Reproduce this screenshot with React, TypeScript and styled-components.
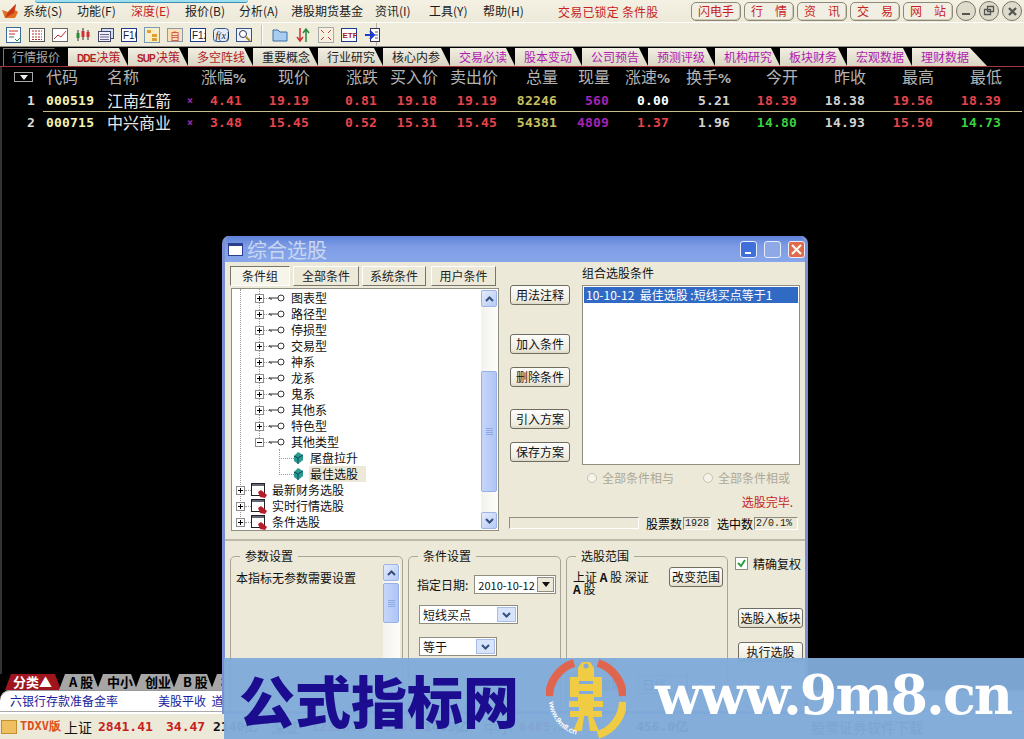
import React from 'react';
import styled, { createGlobalStyle } from 'styled-components';

const Global = createGlobalStyle`
  html, body { margin: 0; padding: 0; background: #000; }
  body { width: 1024px; height: 739px; overflow: hidden; font-family: "Noto Sans CJK SC", "Liberation Sans", sans-serif; font-size: 12px; }
  #root { width: 1024px; height: 739px; position: relative; overflow: hidden; }
  * { box-sizing: border-box; }
`;
const CJK = `"Noto Sans CJK SC", "Liberation Sans", sans-serif`;
const MONO = `"DejaVu Sans Mono", "Liberation Mono", monospace`;

const Page = styled.div`position: relative; display: flex; flex-direction: column; width: 1024px; height: 739px; background: #000;`;

/* ---- menu ---- */
const MenuBar = styled.div`position: relative; display: flex; align-items: center; height: 23px; background: linear-gradient(#f4f1e4, #ece9d8); border-bottom: 1px solid #fff; padding-left: 2px;`;
const TopGlow = styled.div`position: absolute; left: 35px; top: 0; width: 213px; height: 3px; background: #9fe0f0; border-radius: 0 0 6px 6px; border-bottom: 1px solid #3a8fb0;`;
const MenuItems = styled.div`display: flex; margin-left: 4px; width: 535px;`;
const MenuItem = styled.span<{ $red?: boolean; $w: number }>`width: ${p => p.$w}px; flex: none; white-space: nowrap; font-size: 12px; line-height: 16px; color: ${p => (p.$red ? '#c81e1e' : '#1c1c1c')};`;
const Lock = styled.span`width: 133px; flex: none; color: #c81e1e; font-size: 12px; letter-spacing: .2px;`;
const LinkBtn = styled.span`flex: none; display: flex; justify-content: center; gap: 12px; width: 50px; height: 19px; margin-right: 3px; line-height: 16px; font-size: 12px; color: #c81e1e; background: #f1efe3; border: 1px solid #8d8977; border-radius: 5px; box-shadow: inset -1px -1px 0 #cfcab6;`;
const WinBtn = styled.span`flex: none; width: 20px; height: 20px; margin-right: 3px; display: flex; align-items: center; justify-content: center; border-radius: 50%; border: 1px solid #77756a; background: #dedbca; color: #444;`;

/* ---- toolbar ---- */
const ToolBar = styled.div`display: flex; align-items: center; height: 24px; background: #efecdc; padding-left: 2px; border-bottom: 1px solid #8f8d84;`;
const Tools = styled.div`display: flex; align-items: center; height: 24px; width: 375px; border-right: 1px solid #b5b2a2;`;
const ToolSlot = styled.span<{ $w?: number }>`flex: none; width: ${p => p.$w ?? 23}px; height: 18px; display: flex; align-items: center; justify-content: center;`;
const ToolSep = styled.span`flex: none; width: 2px; height: 20px; margin: 0 5px 0 6px; background: #c6c3b2; border-right: 1px solid #fff;`;

/* ---- tabs ---- */
const TabRow = styled.div`display: flex; height: 20px; padding: 1px 0 0 3px; background: #000; border-bottom: 1px solid #a8343c;`;
const Tab = styled.span<{ $w: number; $color: string; $active?: boolean; $slant?: number }>`
  flex: none; width: ${p => p.$w}px; padding-left: 9px; line-height: 18px; font-size: 12px; white-space: nowrap;
  color: ${p => p.$color};
  background: ${p => (p.$active ? '#000' : 'linear-gradient(#f2efe3, #d9d5c3)')};
  ${p => (p.$active ? 'box-shadow: inset 1px 1px 0 #777;' : '')}
  clip-path: polygon(0 0, calc(100% - ${p => p.$slant ?? 9}px) 0, 100% 100%, 0 100%);
`;
const TabLatin = styled.span`font: bold 10px "Liberation Sans", sans-serif; letter-spacing: -.9px; margin-right: 1px;`;

/* ---- quote table ---- */
const Quotes = styled.div`flex: 1; background: #000; border-left: 2px solid #333; overflow: hidden;`;
const cols = '34px 71px 72px 22px 42px 67px 68px 60px 60px 60px 52px 60px 61px 67px 68px 68px 68px';
const HeadRow = styled.div`display: grid; grid-template-columns: ${cols}; height: 23px; padding-bottom: 4px; align-items: center; color: #b4b4b4; font-size: 16px; line-height: 19px; white-space: nowrap;`;
const Th = styled.span<{ $left?: boolean }>`text-align: ${p => (p.$left ? 'left' : 'right')}; ${p => (p.$left ? 'padding-left: 10px;' : '')} & b { font: bold 13px "DejaVu Sans", sans-serif; }`;
const Th2 = styled.span`text-align: left;`;
const SortBtn = styled.span`display: block; width: 19px; height: 10px; margin-left: 12px; border: 1px solid #aaa; position: relative; &::after { content: ''; position: absolute; left: 5px; top: 2px; border: 4px solid transparent; border-top: 5px solid #eee; border-bottom: 0; }`;
const DataRow = styled.div`display: grid; grid-template-columns: ${cols}; height: 21px; align-items: center; font: bold 13px/21px ${MONO}; letter-spacing: .2px; white-space: nowrap;`;
const Td = styled.span<{ $c: string }>`text-align: right; color: ${p => p.$c}; padding-right: 1px;`;
const Code = styled.span`color: #f2f2b8; padding-left: 10px; letter-spacing: .2px;`;
const Name = styled.span`color: #e8e8e8; font: 400 16px/21px ${CJK}; letter-spacing: 0;`;
const Mark = styled.span`color: #a02ca8; font-size: 10px; text-align: center;`;
const RowRule = styled.div`height: 1px; margin: 0 2px 0 41px; background: #c8c088;`;

/* ---- bottom ---- */
const Bottom = styled.div`flex: none; display: flex; flex-direction: column; background: #000;`;
const SheetRow = styled.div`display: flex; height: 16px; padding-left: 5px; background: #000;`;
const Sheet = styled.span<{ $w: number; $on?: boolean }>`flex: none; width: ${p => p.$w}px; line-height: 16px; padding-left: ${p => (p.$on ? 8 : 10)}px; font-size: 13px; font-weight: 700; white-space: nowrap; color: ${p => (p.$on ? '#fff' : '#000')}; background: ${p => (p.$on ? '#a0141e' : '#a6a6a6')}; clip-path: polygon(6px 0, calc(100% - 6px) 0, 100% 100%, 0 100%); margin-right: -2px;`;
const Ticker = styled.div`height: 22px; background: #fff; border-top-left-radius: 10px; border-bottom: 1px solid #aaa; display: flex; align-items: center; padding-left: 10px; color: #1a1a9c; font-size: 12px; white-space: nowrap; gap: 40px; box-shadow: inset 0 1px 0 #999;`;
const Status = styled.div`height: 27px; background: #ece9d8; display: flex; align-items: center; padding-left: 1px; white-space: nowrap; border-top: 2px solid #fff;`;
const StatusIcon = styled.span`flex: none; width: 16px; height: 14px; margin-right: 3px; background: #f0c060; border: 1px solid #c09030;`;
const Brand = styled.span`color: #e0501a; font: bold 12px ${MONO}; width: 44px; flex: none;`;
const IndexName = styled.span<{ $w?: number }>`font-size: 14px; color: #111; width: ${p => p.$w ?? 34}px; flex: none;`;
const IndexVal = styled.span<{ $w: number; $c?: string }>`font: bold 13px ${MONO}; color: ${p => p.$c ?? '#c81e1e'}; width: ${p => p.$w}px; flex: none;`;

/* ---- dialog ---- */
const Dialog = styled.div`position: absolute; left: 222px; top: 236px; width: 586px; height: 478px; background: #ece9d8; border: 3px solid #7c8fd2; border-top: 0; border-radius: 7px 7px 0 0; display: flex; flex-direction: column; overflow: hidden;`;
const TitleBar = styled.div`flex: none; height: 26px; margin: 0 -3px; padding: 0 3px 0 6px; display: flex; align-items: center; background: linear-gradient(#5f82d8, #7d9ce4 40%, #88a6ea); color: #c9d7f2; font-size: 20px; gap: 4px;`;
const TitleIcon = styled.span`width: 15px; height: 13px; background: #fff; border: 1px solid #2a3f8f; border-top-width: 3px;`;
const TitleSpacer = styled.span`flex: 1;`;
const Cap = styled.span<{ $bg: string }>`width: 17px; height: 17px; margin-left: 3px; border: 1px solid #e8eefb; border-radius: 3px; background: ${p => p.$bg}; display: flex; align-items: center; justify-content: center;`;
const Upper = styled.div`flex: none; display: flex; height: 279px; padding: 4px 0 0 5px; border-bottom: 2px solid #bdbaa8;`;
const LeftCol = styled.div`width: 270px; flex: none;`;
const TabBar = styled.div`display: flex; height: 20px; margin-bottom: 2px;`;
const DTab = styled.span<{ $w: number; $on?: boolean; $gap?: number }>`flex: none; width: ${p => p.$w}px; margin-right: ${p => p.$gap ?? 3}px; text-align: center; line-height: 18px; color: #222; background: ${p => (p.$on ? '#f7f5ea' : '#ece9d8')}; border: 1px solid; border-color: ${p => (p.$on ? '#77756a #fff #fff #77756a' : '#fff #77756a #77756a #fff')};`;
const TreeBox = styled.div`position: relative; width: 268px; height: 243px; margin-left: 1px; background: #fff; border: 1px solid #908e80; overflow: hidden; padding-top: 1px;`;
const Guide = styled.span<{ $x: number; $y: number; $h: number }>`position: absolute; left: ${p => p.$x}px; top: ${p => p.$y}px; height: ${p => p.$h}px; border-left: 1px dotted #999;`;
const TreeRow = styled.div<{ $lv: number }>`display: flex; align-items: center; height: 16px; padding-left: ${p => [4, 23, 47][p.$lv]}px; color: #111;`;
const Box = styled.span`flex: none; width: 9px; height: 9px; border: 1px solid #8c8c8c; background: #fff; position: relative; &::before { content: ''; position: absolute; left: 1px; top: 3px; width: 5px; height: 1px; background: #000; }`;
const PlusBox = styled(Box)`&::after { content: ''; position: absolute; left: 3px; top: 1px; width: 1px; height: 5px; background: #000; }`;
const Stub = styled.span<{ $w: number }>`flex: none; width: ${p => p.$w}px; border-top: 1px dotted #999;`;
const RowText = styled.span<{ $sel?: boolean; $ml: number }>`margin-left: ${p => p.$ml}px; padding: 0 ${p => (p.$sel ? '8px' : '0')} 0 ${p => (p.$sel ? '1px' : '0')}; line-height: 16px; white-space: nowrap; background: ${p => (p.$sel ? '#ece9d8' : 'transparent')};`;
const ScrollV = styled.div<{ $x: number; $y: number; $h: number }>`position: absolute; left: ${p => p.$x}px; top: ${p => p.$y}px; width: 17px; height: ${p => p.$h}px; background: linear-gradient(90deg, #f3f2ec, #fdfdfb); display: flex; flex-direction: column; justify-content: space-between;`;
const ScrollBtn = styled.span`flex: none; width: 16px; height: 17px; background: linear-gradient(135deg, #e4ecfd, #b6caf5); border: 1px solid #9db4e4; border-radius: 2px; display: flex; align-items: center; justify-content: center;`;
const Thumb = styled.span<{ $y: number; $h: number }>`position: absolute; left: 0; top: ${p => p.$y}px; width: 16px; height: ${p => p.$h}px; background: linear-gradient(90deg, #c6d6fa, #aec5f5); border: 1px solid #98b0e6; border-radius: 2px; display: flex; align-items: center; justify-content: center; &::after { content: ''; width: 7px; height: 7px; background: repeating-linear-gradient(#8ea8e0 0 1px, transparent 1px 2px); }`;

const MidCol = styled.div`width: 82px; flex: none; padding: 19px 0 0 10px; display: flex; flex-direction: column;`;
const Btn = styled.span<{ $w?: number; $mt?: number }>`flex: none; display: block; width: ${p => p.$w ?? 60}px; height: 20px; margin-top: ${p => p.$mt ?? 0}px; text-align: center; line-height: 18px; color: #111; white-space: nowrap; background: linear-gradient(#fdfdfb, #efece0 80%, #dcd8c6); border: 1px solid #6f6d62; border-radius: 3px;`;
const RightCol = styled.div`flex: 1; position: relative; min-width: 0; padding-right: 5px;`;
const ListLabel = styled.div`height: 15px; line-height: 16px; margin-top: -1px; color: #111; white-space: nowrap;`;
const ListBox = styled.div`width: 218px; height: 180px; margin-top: 5px; background: #fff; border: 1px solid #908e80; padding: 1px;`;
const Selected = styled.div`height: 16px; line-height: 16px; background: #316ac5; color: #fff; padding-left: 2px; white-space: nowrap; font-size: 12px;`;
const RadioRow = styled.div`display: flex; height: 14px; margin: 6px 0 0 5px; color: #aca899; white-space: nowrap;`;
const Radio = styled.label<{ $w: number }>`width: ${p => p.$w}px; flex: none; display: flex; align-items: center; gap: 5px; line-height: 14px;`;
const Dot = styled.span`width: 10px; height: 10px; border-radius: 50%; border: 1px solid #c6c3b4; background: #f5f3ea;`;
const Done = styled.div`height: 16px; margin-top: 9px; margin-right: 0; text-align: right; padding-right: 7px; color: #c81e1e; line-height: 16px;`;
const CountRow = styled.div`position: absolute; left: -73px; top: 250px; display: flex; align-items: center; height: 14px; white-space: nowrap;`;
const Progress = styled.span`flex: none; width: 130px; height: 12px; margin-right: 7px; background: #ece9d8; border: 1px solid; border-color: #8f8d80 #fff #fff #8f8d80;`;
const Counter = styled.span<{ $w: number }>`flex: none; width: ${p => p.$w}px; height: 13px; margin: 0 6px 0 1px; font: 10px/12px "Liberation Mono", monospace; padding-left: 1px; color: #222; border: 1px solid; border-color: #8f8d80 #fff #fff #8f8d80;`;

const Lower = styled.div`flex: 1; display: flex; padding: 9px 0 0 5px; min-height: 0;`;
const Group = styled.fieldset<{ $w: number }>`flex: none; position: relative; width: ${p => p.$w}px; margin: 0 5px 0 0; padding: 5px 4px 0 8px; height: 170px; border: 1px solid #a9a698; border-radius: 5px; min-width: 0; & > legend { padding: 0 5px; margin-left: 1px; line-height: 12px; color: #111; }`;
const GroupText = styled.div`line-height: 14px; color: #111; padding-top: 4px; margin-left: -3px;`;
const DateRow = styled.div`display: flex; align-items: center; gap: 6px; white-space: nowrap; margin-top: 8px; color: #111;`;
const Combo = styled.div<{ $w: number; $mt?: number; $ml?: number }>`width: ${p => p.$w}px; height: 19px; margin: ${p => p.$mt ?? 0}px 0 0 ${p => p.$ml ?? 0}px; background: #fff; border: 1px solid #8f8d80; display: flex; align-items: center; justify-content: space-between; padding: 0 1px 0 3px; color: #111; overflow: hidden; white-space: nowrap;`;
const ComboBtn = styled.span<{ $flat?: boolean }>`flex: none; width: ${p => (p.$flat ? 19 : 17)}px; height: 15px; display: flex; align-items: center; justify-content: center; background: ${p => (p.$flat ? '#d8e4fb' : '#ece9d8')}; border: 1px solid ${p => (p.$flat ? '#a9bde8' : '#8f8d80')}; margin-left: auto;`;
const DateText = styled.span`font-size: 11px; overflow: hidden; width: 60px;`;
const RangeWrap = styled.div`display: flex; justify-content: space-between; align-items: flex-start; padding-top: 0; margin-left: -2px;`;
const RangeText = styled.div`width: 82px; line-height: 12px; color: #111; padding-top: 4px;`;
const PeriodRow = styled.div`display: flex; align-items: center; gap: 12px; margin-top: 80px; color: #111; white-space: nowrap;`;
const Side = styled.div`flex: 1; padding: 5px 0 0 2px;`;
const CheckRow = styled.label`display: flex; align-items: center; gap: 5px; height: 16px; color: #111; white-space: nowrap;`;
const Check = styled.span`flex: none; width: 13px; height: 13px; background: #fff; border: 1px solid #8f8d80; display: flex; align-items: center; justify-content: center;`;
const SideBtn = styled(Btn)`margin-left: 3px;`;

/* ---- watermark ---- */
const Watermark = styled.div`position: absolute; left: 224px; top: 658px; width: 800px; height: 81px; background: rgba(128, 170, 217, .965); display: flex; align-items: center; padding-left: 15px;`;
const WmCn = styled.span`flex: none; width: 307px; font: 900 56px/60px ${CJK}; color: #1c0c90; white-space: nowrap;`;
const WmEn = styled.span`flex: none; margin: -8px 0 0 29px; font: bold 54px/60px "DejaVu Serif", "Liberation Serif", serif; color: #fff; letter-spacing: -2px; white-space: nowrap;`;

const I = ({ w = 16, h = 16, children }: { w?: number; h?: number; children: React.ReactNode }) => (
  <svg width={w} height={h} viewBox={`0 0 ${w} ${h}`}>{children}</svg>
);
const tools: React.ReactNode[] = [
  <I><rect x=".5" y=".5" width="14" height="15" fill="#fff" stroke="#3a6a9a" /><path d="M3 4h9M3 7h6" stroke="#c03030" /><path d="M3 10h5" stroke="#2a8a3a" /><path d="M9 12l2 2 4-4" stroke="#2a8a3a" fill="none" /></I>,
  <I><rect x=".5" y="1.5" width="15" height="13" fill="#fff" stroke="#555" /><path d="M3 4h10M3 7h10M3 10h10M3 12.5h10" stroke="#b03030" strokeDasharray="2 1" /></I>,
  <I><rect x=".5" y="1.5" width="15" height="13" fill="#fff" stroke="#666" /><path d="M2 12l4-4 3 2 5-6" stroke="#c03030" fill="none" /></I>,
  <I><path d="M3 3v11M8 1v12M13 3v10" stroke="#333" /><rect x="1.5" y="6" width="3" height="5" fill="#2a8a3a" /><rect x="6.5" y="4" width="3" height="6" fill="#d03030" /><rect x="11.5" y="5" width="3" height="5" fill="#d03030" /></I>,
  <I><rect x="3.5" y="1.5" width="12" height="10" fill="#cfe0f5" stroke="#446" /><rect x=".5" y="4.5" width="12" height="10" fill="#eef" stroke="#446" /><path d="M2 7.5h9M2 10h9M2 12.5h9" stroke="#668" /></I>,
  <I><rect x=".5" y="1.5" width="15" height="13" fill="#fff" stroke="#1a3a8a" /><text x="2" y="12" fontSize="10" fill="#123" fontFamily="Liberation Sans">F10</text></I>,
  <I><rect x=".5" y=".5" width="15" height="15" fill="#f8efc8" stroke="#7a9ab8" /><rect x="3" y="3" width="4" height="3" fill="#e0a030" /><rect x="8" y="7" width="5" height="3" fill="#e0a030" /><rect x="8" y="11" width="5" height="3" fill="#e0a030" /></I>,
  <I><rect x=".5" y="1.5" width="15" height="13" fill="#f8e0b8" stroke="#8a9ab0" /><text x="3" y="12.5" fontSize="10" fill="#d04818" fontFamily="Noto Sans CJK SC">自</text></I>,
  <I><rect x=".5" y="1.5" width="15" height="13" fill="#fff" stroke="#1a3a8a" /><text x="2" y="12" fontSize="10" fill="#123" fontFamily="Liberation Sans">F1z</text></I>,
  <I><rect x=".5" y="1.5" width="15" height="13" rx="3" fill="#e4ecfa" stroke="#35538a" /><text x="2.5" y="12" fontSize="10" fontStyle="italic" fill="#123" fontFamily="Liberation Serif">f(x)</text></I>,
  <I><rect x=".5" y="1.5" width="15" height="13" fill="#eef3fb" stroke="#35538a" /><circle cx="7" cy="7" r="3.5" fill="#fff" stroke="#335" /><path d="M10 10l4 4" stroke="#b08a20" strokeWidth="2" /></I>,
];
const tools2: React.ReactNode[] = [
  <I><path d="M1 3h5l2 2h7v9H1z" fill="#a8cdf0" stroke="#3c6fa8" /></I>,
  <I><path d="M5 1v12M2 10l3 4 3-4" stroke="#d03030" fill="none" strokeWidth="1.5" /><path d="M11 15V3M8 6l3-4 3 4" stroke="#2a8a3a" fill="none" strokeWidth="1.5" /></I>,
  <I><rect x=".5" y=".5" width="15" height="15" fill="#f6f0e0" stroke="#aaa" /><path d="M3 3l3 3M13 3l-3 3M3 13l3-3M13 13l-3-3" stroke="#c04040" /></I>,
  <I><rect x=".5" y="1.5" width="15" height="13" fill="#fff" stroke="#1a3a8a" /><text x="1.5" y="11" fontSize="8" fontWeight="700" fill="#a02020" fontFamily="Liberation Sans">ETF</text></I>,
  <I><rect x="6.5" y="1.5" width="9" height="13" fill="#fff" stroke="#335" /><path d="M1 8h8M6 4l4 4-4 4" stroke="#1a3ad0" fill="none" strokeWidth="2" /><path d="M11 5h3M11 8h3M11 11h3" stroke="#557" /></I>,
];

const TABS: [string, string, number][] = [
  ['多空阵线', '#b01c24', 65], ['重要概念', '#222', 65], ['行业研究', '#222', 65], ['核心内参', '#222', 67],
  ['交易必读', '#b01cb0', 65], ['股本变动', '#b01cb0', 67], ['公司预告', '#b01cb0', 66], ['预测评级', '#b01cb0', 67], ['机构研究', '#b01cb0', 65], ['板块财务', '#b01cb0', 67], ['宏观数据', '#b01cb0', 65],
];
const R = '#e8434b', G = '#3cd040', W = '#d4d4d4', Y = '#c8c060', P = '#a424b4';

const KeyIcon = () => (
  <svg width="16" height="8" viewBox="0 0 16 8" style={{ flex: 'none' }}><path d="M0 4h9M2 4v2M0 3v2" stroke="#333" /><circle cx="12" cy="4" r="3" fill="#fff" stroke="#333" /></svg>
);
const Cube = () => (
  <svg width="9" height="12" viewBox="0 0 9 12" style={{ flex: 'none' }}><path d="M4 0l5 3v5l-5 4-4-3V4z" fill="#2a9a90" /><path d="M0 4l4 2 5-3M4 6v6" stroke="#0d4a50" fill="none" /></svg>
);
const Sheetcon = () => (
  <svg width="17" height="15" viewBox="0 0 17 15" style={{ flex: 'none' }}><rect x=".5" y=".5" width="13" height="12" fill="#fff" stroke="#222" /><rect x="1" y="1" width="12" height="2" fill="#667" /><path d="M7 9l3-2 6 5-2 3-5-1z" fill="#b81c28" /></svg>
);
const Up = () => <svg width="9" height="6" viewBox="0 0 9 6"><path d="M1 5l3.5-3.5L8 5" stroke="#34507c" strokeWidth="2" fill="none" /></svg>;
const Down = () => <svg width="9" height="6" viewBox="0 0 9 6"><path d="M1 1l3.5 3.5L8 1" stroke="#34507c" strokeWidth="2" fill="none" /></svg>;

const LEVEL1 = ['图表型', '路径型', '停损型', '交易型', '神系', '龙系', '鬼系', '其他系', '特色型'];

export default function App() {
  return (
    <Page>
      <Global />
      <MenuBar>
        <svg width="17" height="17" viewBox="0 0 17 17" style={{ flex: 'none' }}><path d="M0 7l6 2L14 1l-1 6 3 2-3 6H3z" fill="#e07020" /><path d="M3 15l3-6 8-8-2 9z" fill="#c83818" /></svg>
        <TopGlow />
        <MenuItems>
          {[['系统(S)', 54], ['功能(F)', 54], ['深度(E)', 54, true], ['报价(B)', 54], ['分析(A)', 52], ['港股期货基金', 84], ['资讯(I)', 54], ['工具(Y)', 54], ['帮助(H)', 75]].map(([t, w, r]) => (
            <MenuItem key={t as string} $w={w as number} $red={!!r}>{t as string}</MenuItem>
          ))}
        </MenuItems>
        <Lock>交易已锁定 条件股</Lock>
        <LinkBtn>闪电手</LinkBtn>
        <LinkBtn><span>行</span><span>情</span></LinkBtn>
        <LinkBtn><span>资</span><span>讯</span></LinkBtn>
        <LinkBtn><span>交</span><span>易</span></LinkBtn>
        <LinkBtn><span>网</span><span>站</span></LinkBtn>
        <WinBtn><svg width="10" height="10" viewBox="0 0 10 10"><path d="M1 8h8" stroke="#555" strokeWidth="2" /></svg></WinBtn>
        <WinBtn><svg width="12" height="12" viewBox="0 0 12 12"><path d="M4.5 1.5h6v5h-6zM1.5 4.5h6v5h-6z" stroke="#555" fill="none" strokeWidth="1.3" /></svg></WinBtn>
        <WinBtn><svg width="11" height="11" viewBox="0 0 11 11"><path d="M2 2l7 7M9 2l-7 7" stroke="#555" strokeWidth="2.4" /></svg></WinBtn>
      </MenuBar>
      <ToolBar>
        <Tools>
          {tools.map((t, i) => <ToolSlot key={i}>{t}</ToolSlot>)}
          <ToolSep />
          {tools2.map((t, i) => <ToolSlot key={i}>{t}</ToolSlot>)}
        </Tools>
      </ToolBar>
      <TabRow>
        <Tab $w={65} $color="#a8a8a8" $active $slant={14}>行情报价</Tab>
        <Tab $w={60} $color="#b01c24"><TabLatin>DDE</TabLatin>决策</Tab>
        <Tab $w={60} $color="#b01c24"><TabLatin>SUP</TabLatin>决策</Tab>
        {TABS.map(([t, c, w]) => <Tab key={t} $w={w} $color={c}>{t}</Tab>)}
        <Tab $w={75} $color="#b01cb0" $slant={17}>理财数据</Tab>
      </TabRow>
      <Quotes>
        <HeadRow>
          <SortBtn />
          <Th $left>代码</Th>
          <Th2>名称</Th2>
          <span />
          <Th>涨幅<b>%</b></Th><Th>现价</Th><Th>涨跌</Th><Th>买入价</Th><Th>卖出价</Th><Th>总量</Th><Th>现量</Th><Th>涨速<b>%</b></Th><Th>换手<b>%</b></Th><Th>今开</Th><Th>昨收</Th><Th>最高</Th><Th>最低</Th>
        </HeadRow>
        <DataRow>
          <Td $c="#ddd">1</Td><Code>000519</Code><Name>江南红箭</Name><Mark>×</Mark>
          <Td $c={R}>4.41</Td><Td $c={R}>19.19</Td><Td $c={R}>0.81</Td><Td $c={R}>19.18</Td><Td $c={R}>19.19</Td><Td $c={Y}>82246</Td><Td $c={P}>560</Td><Td $c="#fff">0.00</Td><Td $c={W}>5.21</Td><Td $c={R}>18.39</Td><Td $c={W}>18.38</Td><Td $c={R}>19.56</Td><Td $c={R}>18.39</Td>
        </DataRow>
        <RowRule />
        <DataRow>
          <Td $c="#ddd">2</Td><Code>000715</Code><Name>中兴商业</Name><Mark>×</Mark>
          <Td $c={R}>3.48</Td><Td $c={R}>15.45</Td><Td $c={R}>0.52</Td><Td $c={R}>15.31</Td><Td $c={R}>15.45</Td><Td $c={Y}>54381</Td><Td $c={P}>4809</Td><Td $c={R}>1.37</Td><Td $c={W}>1.96</Td><Td $c={G}>14.80</Td><Td $c={W}>14.93</Td><Td $c={R}>15.50</Td><Td $c={G}>14.73</Td>
        </DataRow>
      </Quotes>
      <Bottom>
        <SheetRow>
          <Sheet $w={56} $on>分类▲</Sheet>
          <Sheet $w={40}>A 股</Sheet>
          <Sheet $w={40}>中小</Sheet>
          <Sheet $w={40}>创业</Sheet>
          <Sheet $w={40}>B 股</Sheet>
          <Sheet $w={40}>板块</Sheet>
        </SheetRow>
        <Ticker><span>六银行存款准备金率</span><span>美股平收&nbsp;&nbsp;道琼斯</span></Ticker>
        <Status>
          <StatusIcon />
          <Brand>TDXV版</Brand>
          <IndexName>上证</IndexName>
          <IndexVal $w={68}>2841.41</IndexVal>
          <IndexVal $w={47}>34.47</IndexVal>
          <IndexVal $w={58} $c="#111">2140亿</IndexVal>
          <IndexName $w={40}>深证</IndexName>
          <IndexVal $w={73}>12323.3</IndexVal>
          <IndexVal $w={40}>135.03</IndexVal>
          <IndexVal $w={60} $c="#111">1495亿</IndexVal>
          <IndexName $w={35}>中小</IndexName>
          <IndexVal $w={117}>6465.3</IndexVal>
          <IndexVal $w={175} $c="#111">456.0亿</IndexVal>
          <IndexName $w={170}>股票证券软件下载</IndexName>
        </Status>
      </Bottom>

      <Dialog>
        <TitleBar>
          <TitleIcon />综合选股<TitleSpacer />
          <Cap $bg="#3f6fd8"><svg width="11" height="11" viewBox="0 0 11 11"><path d="M2 9h6" stroke="#fff" strokeWidth="2" /></svg></Cap>
          <Cap $bg="#8ea9e6" />
          <Cap $bg="#e06a4a"><svg width="11" height="11" viewBox="0 0 11 11"><path d="M1 1l9 9M10 1l-9 9" stroke="#fff" strokeWidth="2" /></svg></Cap>
        </TitleBar>
        <Upper>
          <LeftCol>
            <TabBar>
              <DTab $w={60} $on>条件组</DTab>
              <DTab $w={66}>全部条件</DTab>
              <DTab $w={64} $gap={5}>系统条件</DTab>
              <DTab $w={65}>用户条件</DTab>
            </TabBar>
            <TreeBox>
              <Guide $x={8} $y={0} $h={230} />
              <Guide $x={27} $y={0} $h={155} />
              <Guide $x={47} $y={160} $h={24} />
              {LEVEL1.map(t => (
                <TreeRow key={t} $lv={1}><PlusBox /><Stub $w={5} /><KeyIcon /><RowText $ml={6}>{t}</RowText></TreeRow>
              ))}
              <TreeRow $lv={1}><Box /><Stub $w={5} /><KeyIcon /><RowText $ml={6}>其他类型</RowText></TreeRow>
              <TreeRow $lv={2}><Stub $w={15} /><Cube /><RowText $ml={7}>尾盘拉升</RowText></TreeRow>
              <TreeRow $lv={2}><Stub $w={15} /><Cube /><RowText $ml={6} $sel>最佳选股</RowText></TreeRow>
              {['最新财务选股', '实时行情选股', '条件选股'].map(t => (
                <TreeRow key={t} $lv={0}><PlusBox /><Stub $w={6} /><Sheetcon /><RowText $ml={4}>{t}</RowText></TreeRow>
              ))}
              <ScrollV $x={249} $y={1} $h={239}>
                <ScrollBtn><Up /></ScrollBtn>
                <Thumb $y={81} $h={121} />
                <ScrollBtn><Down /></ScrollBtn>
              </ScrollV>
            </TreeBox>
          </LeftCol>
          <MidCol>
            <Btn>用法注释</Btn>
            <Btn $mt={29}>加入条件</Btn>
            <Btn $mt={13}>删除条件</Btn>
            <Btn $mt={22}>引入方案</Btn>
            <Btn $mt={13}>保存方案</Btn>
          </MidCol>
          <RightCol>
            <ListLabel>组合选股条件</ListLabel>
            <ListBox><Selected>10-10-12&nbsp;&nbsp;最佳选股 :短线买点等于1</Selected></ListBox>
            <RadioRow>
              <Radio $w={116}><Dot />全部条件相与</Radio>
              <Radio $w={100}><Dot />全部条件相或</Radio>
            </RadioRow>
            <Done>选股完毕.</Done>
            <CountRow>
              <Progress />股票数<Counter $w={28}>1928</Counter>选中数<Counter $w={44}>2/0.1%</Counter>
            </CountRow>
          </RightCol>
        </Upper>
        <Lower>
          <Group $w={173}>
            <legend>参数设置</legend>
            <GroupText>本指标无参数需要设置</GroupText>
            <ScrollV $x={152} $y={2} $h={160}>
              <ScrollBtn><Up /></ScrollBtn>
              <Thumb $y={19} $h={40} />
            </ScrollV>
          </Group>
          <Group $w={153}>
            <legend>条件设置</legend>
            <DateRow>指定日期:<Combo $w={82}><DateText>2010-10-12</DateText><ComboBtn><svg width="8" height="5" viewBox="0 0 8 5"><path d="M0 0h8L4 5z" fill="#111" /></svg></ComboBtn></Combo></DateRow>
            <Combo $w={99} $mt={11} $ml={2}>短线买点<ComboBtn $flat><Down /></ComboBtn></Combo>
            <Combo $w={78} $mt={13} $ml={2}>等于<ComboBtn $flat><Down /></ComboBtn></Combo>
          </Group>
          <Group $w={162}>
            <legend>选股范围</legend>
            <RangeWrap>
              <RangeText>上证 <b>A</b> 股 深证 <b>A</b> 股</RangeText>
              <Btn $w={54}>改变范围</Btn>
            </RangeWrap>
            <PeriodRow>选股周期:<Combo $w={50}>日线</Combo></PeriodRow>
          </Group>
          <Side>
            <CheckRow>
              <Check><svg width="9" height="9" viewBox="0 0 9 9"><path d="M1 4l3 3 4-6" stroke="#2a9a3a" strokeWidth="2" fill="none" /></svg></Check>
              精确复权
            </CheckRow>
            <SideBtn $w={65} $mt={37}>选股入板块</SideBtn>
            <SideBtn $w={65} $mt={14}>执行选股</SideBtn>
          </Side>
        </Lower>
      </Dialog>

      <Watermark>
        <WmCn>公式指标网</WmCn>
        <svg width="80" height="80" viewBox="0 0 80 80" style={{ flex: 'none' }}>
          <path d="M3 37A36 36 0 0 1 28 4" stroke="#e0654e" strokeWidth="8" fill="none" />
          <path d="M52 4A36 36 0 0 1 77 37" stroke="#e0654e" strokeWidth="8" fill="none" />
          <path d="M77 43A36 36 0 0 1 52 76" stroke="#f0cc44" strokeWidth="8" fill="none" />
          <path d="M24 18h8V9l4-6h8l4 6v9h8v20H48v4h9v6H47v4h9v6H47l6 14H44l-2-15h-4l-2 15h-9l6-14h-9v-6h9v-4H23v-6h9v-4h-8z" fill="#f0cc44" />
          <path d="M33 22h14v3H33zM33 32h14v3H33z" fill="#80aad9" />
          <circle cx="40" cy="7" r="2.5" fill="#80aad9" />
          <path id="wmArc" d="M3 43A37 37 0 0 0 38 77" fill="none" />
          <text fontSize="7.5" fontWeight="700" fill="#fff" fontFamily="Liberation Sans"><textPath href="#wmArc">www.9m8.cn</textPath></text>
        </svg>
        <WmEn>www.9m8.cn</WmEn>
      </Watermark>
    </Page>
  );
}
